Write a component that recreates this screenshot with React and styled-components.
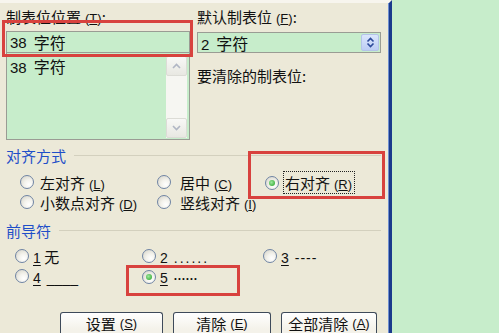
import React from "react"
import styled, { createGlobalStyle } from "styled-components"

const GlobalStyle = createGlobalStyle`
  html, body {
    margin: 0;
    padding: 0;
    background: #c7edcb;
  }
  body {
    font-family: "Noto Sans CJK SC", "Liberation Sans", sans-serif;
    color: #111;
  }
`

const Page = styled.div`
  display: flex;
  width: 499px;
  height: 333px;
  overflow: hidden;
`

const Dialog = styled.div`
  flex: none;
  width: 392px;
  box-sizing: border-box;
  background: #ece9d8;
  border-top: 3px solid #f7f5ee;
  border-right: 3px solid #1a3a8c;
  box-shadow: inset -1px 0 0 #6f8fd0;
  padding: 5px 8px 0 6px;
`

const TopGrid = styled.div`
  display: grid;
  grid-template-columns: 184px 184px;
  column-gap: 7px;
`

const Column = styled.div`
  display: flex;
  flex-direction: column;
`

const Label = styled.div`
  font-size: 15px;
  line-height: 17px;
  height: 17px;
  white-space: nowrap;
  margin: ${(p) => p.$margin || "0"};
`

const AccText = styled.span`
  font-family: "Liberation Sans", sans-serif;
  font-size: 13px;
  margin-left: 4px;
  u {
    text-underline-offset: 1px;
  }
`

const Num = styled.span`
  font-family: "Liberation Sans", sans-serif;
  font-size: 14px;
  text-decoration: underline;
  text-underline-offset: 2px;
`

const Digits = styled.span`
  font-family: "Liberation Sans", sans-serif;
  font-size: 15px;
  margin-right: 7px;
`

const Marked = styled.div`
  position: relative;
  &::after {
    content: "";
    position: absolute;
    top: ${(p) => p.$top}px;
    left: ${(p) => p.$left}px;
    width: ${(p) => p.$width}px;
    height: ${(p) => p.$height}px;
    border: 3px solid #d8423e;
    box-sizing: border-box;
    pointer-events: none;
  }
`

const TextInput = styled.div`
  height: 22px;
  box-sizing: border-box;
  border: 1px solid #9a9c94;
  background: #c7edcb;
  display: flex;
  align-items: center;
  padding-left: 3px;
  font-size: 16px;
  margin-top: ${(p) => p.$gap || 0}px;
`

const List = styled.div`
  height: 87px;
  box-sizing: border-box;
  border: 1px solid #9a9c94;
  border-top: none;
  background: #c7edcb;
  display: flex;
`

const ListItems = styled.div`
  flex: 1;
  padding: 4px 0 0 3px;
  font-size: 16px;
  line-height: 18px;
`

const ScrollBar = styled.div`
  width: 21px;
  margin: 3px 2px 1px 0;
  background: #f6f6f2;
  display: flex;
  flex-direction: column;
  justify-content: space-between;
`

const ScrollButton = styled.div`
  height: 20px;
  box-sizing: border-box;
  border: 1px solid #dcdcd6;
  border-radius: 2px;
  background: linear-gradient(#f8f8f6, #e8e8e2);
  display: flex;
  align-items: center;
  justify-content: center;
`

const SpinBox = styled(TextInput)`
  justify-content: space-between;
  padding-right: 1px;
  height: 21px;
`

const SpinButton = styled.div`
  width: 18px;
  height: 17px;
  box-sizing: border-box;
  border: 1px solid #b4c4e8;
  border-radius: 2px;
  background: linear-gradient(#dbe6fc, #bccdf4);
  display: flex;
  align-items: center;
  justify-content: center;
`

const GroupTitle = styled.div`
  display: flex;
  align-items: center;
  gap: 8px;
  margin-top: ${(p) => p.$gap}px;
  font-size: 15px;
  line-height: 17px;
  color: #1f4fc8;
  &::after {
    content: "";
    flex: 1;
    height: 1px;
    background: #d3d0be;
  }
`

const RadioGrid = styled.div`
  display: grid;
  grid-template-columns: ${(p) => p.$cols};
  grid-auto-rows: 20px;
  padding: ${(p) => p.$pad};
`

const RadioItem = styled.div`
  display: flex;
  align-items: center;
  gap: ${(p) => p.$gap || 6}px;
  font-size: 15px;
  white-space: nowrap;
`

const RadioCircle = styled.span`
  flex: none;
  width: 14px;
  height: 14px;
  box-sizing: border-box;
  border-radius: 50%;
  border: 1px solid #6f84a4;
  background: radial-gradient(circle at 65% 70%, #ffffff 0%, #f3f2ec 40%, #d2d0c4 100%);
  display: flex;
  align-items: center;
  justify-content: center;
  &::after {
    content: "";
    display: ${(p) => (p.$checked ? "block" : "none")};
    width: 6px;
    height: 6px;
    border-radius: 50%;
    background: radial-gradient(circle at 40% 40%, #9ee89e, #22a022);
  }
`

const Focus = styled.span`
  border: 1px dotted #222;
  padding: 0 2px 0 1px;
  line-height: 18px;
`

const Leader = styled.span`
  font-family: "Liberation Sans", sans-serif;
  font-size: ${(p) => p.$size || 14}px;
  letter-spacing: ${(p) => p.$spacing || 0}px;
  font-weight: ${(p) => (p.$bold ? 700 : 400)};
  margin-left: 6px;
`

const ButtonRow = styled.div`
  display: flex;
  gap: 10px;
  padding-left: 54px;
  margin-top: 26px;
`

const Button = styled.div`
  width: ${(p) => p.$width}px;
  height: 21px;
  box-sizing: border-box;
  border: 1px solid #3e4a5a;
  border-bottom: none;
  border-radius: 3px 3px 0 0;
  background: linear-gradient(#ffffff, #f4f2ea 80%);
  display: flex;
  align-items: center;
  justify-content: center;
  padding-top: 1px;
  font-size: 15px;
  line-height: 18px;
`

const Green = styled.div`
  flex: 1;
  background: #c7edcb;
`

const Acc = ({ k }) => (
  <AccText>
    (<u>{k}</u>)
  </AccText>
)

const Chevron = ({ up, color = "#b0b6c4" }) => (
  <svg width="9" height="6" viewBox="0 0 9 6">
    <path
      d={up ? "M1 5 L4.5 1.5 L8 5" : "M1 1 L4.5 4.5 L8 1"}
      fill="none"
      stroke={color}
      strokeWidth="1.6"
    />
  </svg>
)

const Radio = ({ checked, gap, children }) => (
  <RadioItem $gap={gap}>
    <RadioCircle $checked={checked} />
    <span>{children}</span>
  </RadioItem>
)

const App = () => (
  <Page>
    <GlobalStyle />
    <Dialog>
      <TopGrid>
        <Column>
          <Marked $top={12} $left={-4} $width={191} $height={37}>
            <Label>
              制表位位置<Acc k="T" />:
            </Label>
            <TextInput $gap={6}>
              <Digits>38</Digits>字符
            </TextInput>
          </Marked>
          <List>
            <ListItems>
              <Digits>38</Digits>字符
            </ListItems>
            <ScrollBar>
              <ScrollButton>
                <Chevron up />
              </ScrollButton>
              <ScrollButton>
                <Chevron />
              </ScrollButton>
            </ScrollBar>
          </List>
        </Column>
        <Column>
          <Label>
            默认制表位<Acc k="F" />:
          </Label>
          <SpinBox $gap={7}>
            <span>
              <Digits>2</Digits>字符
            </span>
            <SpinButton>
              <svg width="9" height="11" viewBox="0 0 9 11">
                <path d="M1.5 4.5 L4.5 1.5 L7.5 4.5 M1.5 6.5 L4.5 9.5 L7.5 6.5" fill="none" stroke="#2c4a9a" strokeWidth="1.6" />
              </svg>
            </SpinButton>
          </SpinBox>
          <Label $margin="14px 0 0 0">要清除的制表位:</Label>
        </Column>
      </TopGrid>

      <GroupTitle $gap={7}>对齐方式</GroupTitle>
      <RadioGrid $cols="137px 108px 1fr" $pad="8px 0 0 14px">
        <Radio>
          左对齐<Acc k="L" />
        </Radio>
        <Radio gap={9}>
          居中<Acc k="C" />
        </Radio>
        <Marked $top={-21} $left={-17} $width={137} $height={48}>
          <Radio checked gap={4}>
            <Focus>
              右对齐<Acc k="R" />
            </Focus>
          </Radio>
        </Marked>
        <Radio>
          小数点对齐<Acc k="D" />
        </Radio>
        <Radio gap={9}>
          竖线对齐<Acc k="I" />
        </Radio>
      </RadioGrid>

      <GroupTitle $gap={10}>前导符</GroupTitle>
      <RadioGrid $cols="127px 121px 1fr" $pad="7px 0 0 9px">
        <Radio gap={4}>
          <Num>1</Num> 无
        </Radio>
        <Radio gap={4}>
          <Num>2</Num>
          <Leader $spacing={2}>......</Leader>
        </Radio>
        <Radio gap={4}>
          <Num>3</Num>
          <Leader $spacing={1}>----</Leader>
        </Radio>
        <Radio gap={4}>
          <Num>4</Num>
          <Leader>____</Leader>
        </Radio>
        <Marked $top={-1} $left={-16} $width={114} $height={31}>
          <Radio checked gap={4}>
            <Num>5</Num>
            <Leader $bold $size={12}>······</Leader>
          </Radio>
        </Marked>
      </RadioGrid>

      <ButtonRow>
        <Button $width={103}>
          设置<Acc k="S" />
        </Button>
        <Button $width={98}>
          清除<Acc k="E" />
        </Button>
        <Button $width={96}>
          全部清除<Acc k="A" />
        </Button>
      </ButtonRow>
    </Dialog>
    <Green />
  </Page>
)

export default App
